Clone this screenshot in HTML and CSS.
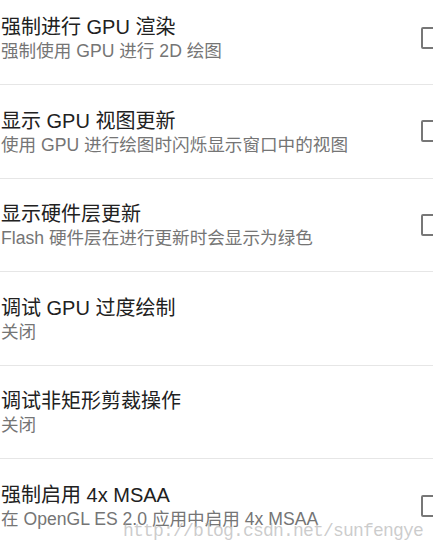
FILE: index.html
```html
<!DOCTYPE html>
<html lang="zh-CN">
<head>
  <meta charset="UTF-8">
  <meta name="viewport" content="width=device-width, initial-scale=1.0">
  <title>开发者选项</title>
  <link rel="stylesheet" href="styles.css">
</head>
<body>
  <ul class="prefs">
    <li class="pref">
      <div class="pref-text">
        <div class="pref-title">强制进行 GPU 渲染</div>
        <div class="pref-summary">强制使用 GPU 进行 2D 绘图</div>
      </div>
      <span class="checkbox"></span>
    </li>
    <li class="pref">
      <div class="pref-text">
        <div class="pref-title">显示 GPU 视图更新</div>
        <div class="pref-summary">使用 GPU 进行绘图时闪烁显示窗口中的视图</div>
      </div>
      <span class="checkbox"></span>
    </li>
    <li class="pref">
      <div class="pref-text">
        <div class="pref-title">显示硬件层更新</div>
        <div class="pref-summary">Flash 硬件层在进行更新时会显示为绿色</div>
      </div>
      <span class="checkbox"></span>
    </li>
    <li class="pref">
      <div class="pref-text">
        <div class="pref-title">调试 GPU 过度绘制</div>
        <div class="pref-summary">关闭</div>
      </div>
    </li>
    <li class="pref">
      <div class="pref-text">
        <div class="pref-title">调试非矩形剪裁操作</div>
        <div class="pref-summary">关闭</div>
      </div>
    </li>
    <li class="pref">
      <div class="pref-text">
        <div class="pref-title">强制启用 4x MSAA</div>
        <div class="pref-summary">在 OpenGL ES 2.0 应用中启用 4x MSAA</div>
      </div>
      <span class="checkbox"></span>
    </li>
  </ul>

  <div class="watermark">http://blog.csdn.net/sunfengye</div>
</body>
</html>
```

FILE: styles.css
```css
html, body {
  margin: 0;
  padding: 0;
  overflow: hidden;
  background-color: #fff;
}
body {
  font-family: "Liberation Sans", "Noto Sans CJK SC", sans-serif;
  height: 552px;
  position: relative;
}
.prefs {
  list-style: none;
  margin: -8.5px 0 0 0;
  padding: 0;
  width: 443px;
}
.pref {
  box-sizing: border-box;
  height: 93.5px;
  display: flex;
  align-items: center;
  justify-content: space-between;
  padding-left: 1px;
  border-bottom: 1px solid #e6e6e6;
}
.pref:last-child {
  border-bottom: none;
}
.pref-title {
  font-size: 20px;
  line-height: 25px;
  color: #212121;
  margin-top: 2px;
}
.pref-summary {
  font-size: 17.6px;
  line-height: 22px;
  color: #757575;
}
.checkbox {
  box-sizing: border-box;
  width: 22px;
  height: 22px;
  border: 2px solid #777;
  border-radius: 2px;
  flex-shrink: 0;
}
.watermark {
  position: absolute;
  left: 123px;
  top: 521px;
  font-family: "Liberation Mono", monospace;
  font-size: 18px;
  letter-spacing: -0.8px;
  color: rgba(170, 170, 170, 0.6);
  white-space: nowrap;
}
```
